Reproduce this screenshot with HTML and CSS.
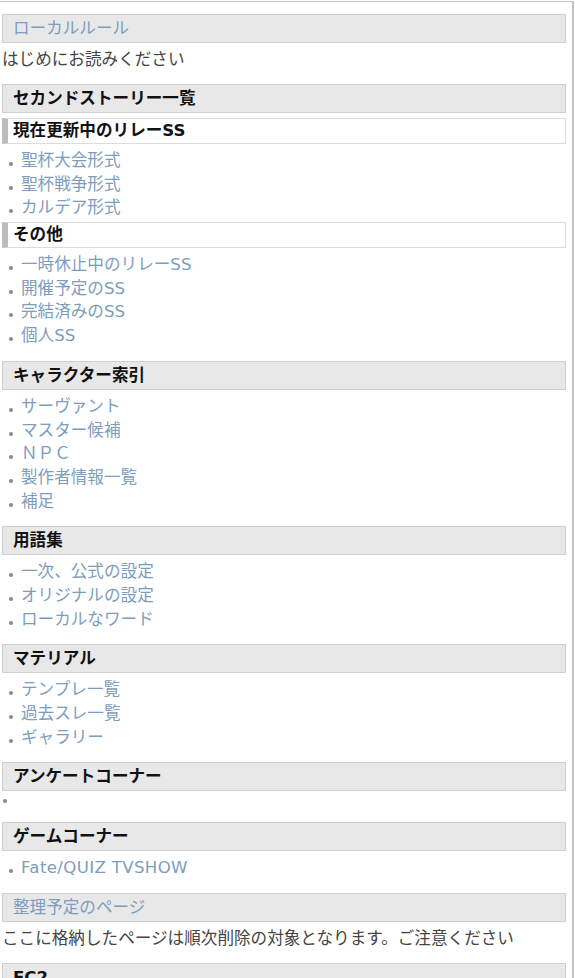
FILE: index.html
```html
<!DOCTYPE html>
<html lang="ja">
<head>
<meta charset="utf-8">
<title>メニュー</title>
<link rel="stylesheet" href="styles.css">
</head>
<body>
<div class="side">
  <h2 class="h2"><a href="#">ローカルルール</a></h2>
  <p class="txt">はじめにお読みください</p>

  <h2 class="h2">セカンドストーリー一覧</h2>
  <h3 class="h3">現在更新中のリレーSS</h3>
  <ul class="list list-mid">
    <li><a href="#">聖杯大会形式</a></li>
    <li><a href="#">聖杯戦争形式</a></li>
    <li><a href="#">カルデア形式</a></li>
  </ul>
  <h3 class="h3">その他</h3>
  <ul class="list">
    <li><a href="#">一時休止中のリレーSS</a></li>
    <li><a href="#">開催予定のSS</a></li>
    <li><a href="#">完結済みのSS</a></li>
    <li><a href="#">個人SS</a></li>
  </ul>

  <h2 class="h2">キャラクター索引</h2>
  <ul class="list">
    <li><a href="#">サーヴァント</a></li>
    <li><a href="#">マスター候補</a></li>
    <li><a href="#">ＮＰＣ</a></li>
    <li><a href="#">製作者情報一覧</a></li>
    <li><a href="#">補足</a></li>
  </ul>

  <h2 class="h2">用語集</h2>
  <ul class="list">
    <li><a href="#">一次、公式の設定</a></li>
    <li><a href="#">オリジナルの設定</a></li>
    <li><a href="#">ローカルなワード</a></li>
  </ul>

  <h2 class="h2">マテリアル</h2>
  <ul class="list">
    <li><a href="#">テンプレ一覧</a></li>
    <li><a href="#">過去スレ一覧</a></li>
    <li><a href="#">ギャラリー</a></li>
  </ul>

  <h2 class="h2">アンケートコーナー</h2>
  <ul class="list list-empty">
    <li></li>
  </ul>

  <h2 class="h2">ゲームコーナー</h2>
  <ul class="list">
    <li><a href="#" class="latin">Fate/QUIZ TVSHOW</a></li>
  </ul>

  <h2 class="h2"><a href="#">整理予定のページ</a></h2>
  <p class="txt">ここに格納したページは順次削除の対象となります。ご注意ください</p>

  <h2 class="h2">FC2</h2>
</div>
</body>
</html>
```

FILE: styles.css
```css
html, body {
  margin: 0;
  padding: 0;
  background: #fff;
}
body {
  font-family: "DejaVu Sans", "Noto Sans CJK JP", sans-serif;
  font-size: 16.6px;
  color: #444;
}
.side {
  margin-top: 1px;
  width: 574px;
  border-top: 1px solid #c4c4c4;
  border-right: 2px solid #c4c4c4;
  padding: 12px 6px 20px 2px;
  box-sizing: border-box;
}
a {
  color: #7d9dbd;
  text-decoration: none;
}
.latin {
  letter-spacing: 0.35px;
}
.h2 {
  margin: 0 0 5px;
  height: 29px;
  overflow: hidden;
  box-sizing: border-box;
  background: #e8e8e8;
  border: 1px solid #cfcfcf;
  padding: 0 0 0 10px;
  font-size: 16.6px;
  line-height: 27px;
  font-weight: bold;
  color: #111;
}
.h2 a {
  font-weight: normal;
}
.h3 {
  margin: 4px 0 5px;
  height: 26px;
  overflow: hidden;
  box-sizing: border-box;
  background: #fff;
  border: 1px solid #dcdcdc;
  border-left: 6px solid #bdbdbd;
  padding: 0 0 0 5px;
  font-size: 16.6px;
  line-height: 24px;
  font-weight: bold;
  color: #111;
}
.list-mid + .h3 {
  margin-top: 2px;
}
.txt {
  margin: 0 0 12px;
  height: 24px;
  line-height: 24px;
  overflow: hidden;
  white-space: nowrap;
}
.list {
  list-style: none;
  margin: 0 0 13px;
  padding: 0;
}
.list.list-mid {
  margin-bottom: 0;
}
.list li {
  position: relative;
  padding-left: 19px;
  height: 23.7px;
  line-height: 23.7px;
  white-space: nowrap;
}
.list li::before {
  content: "";
  position: absolute;
  left: 7px;
  top: 13px;
  width: 4px;
  height: 4px;
  border-radius: 50%;
  background: #8a8a8a;
}
.list-empty li {
  height: 13px;
}
.list-empty li::before {
  left: 1px;
  top: 3px;
}
```
